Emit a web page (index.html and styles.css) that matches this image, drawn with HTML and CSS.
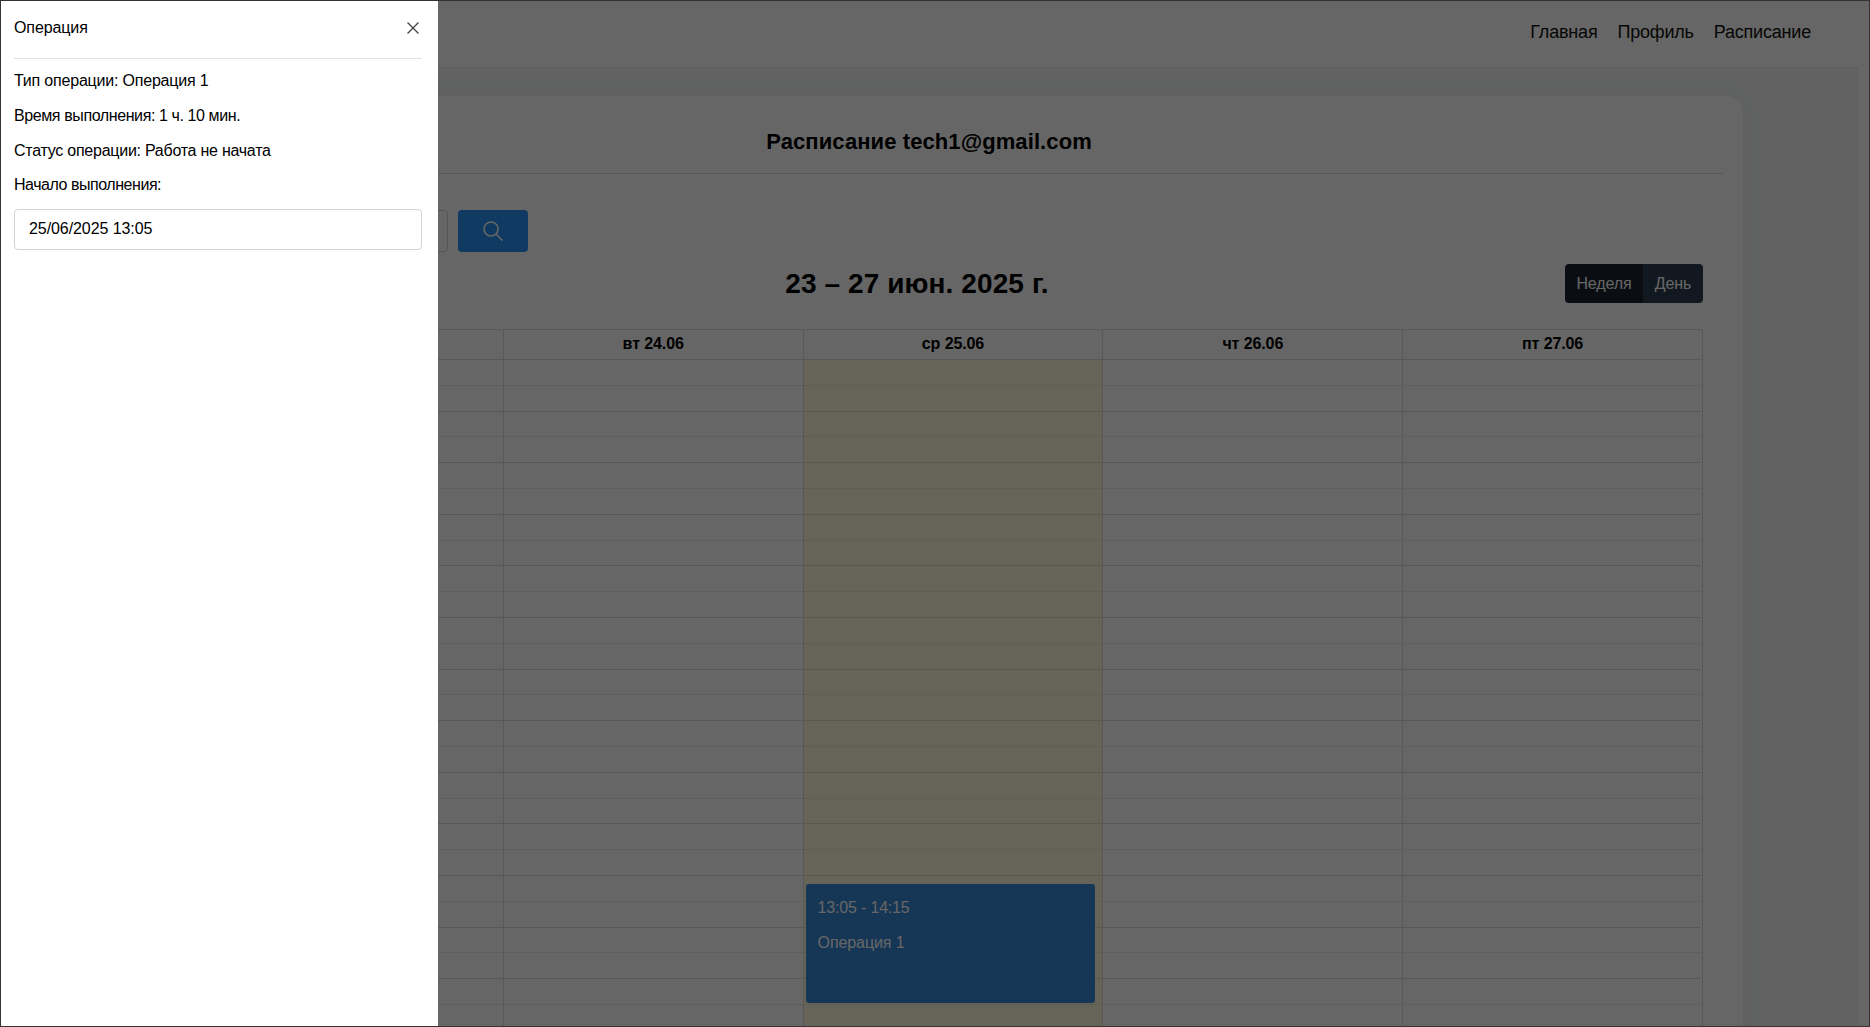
FILE: index.html
```html
<!DOCTYPE html>
<html lang="ru">
<head>
    <meta charset="UTF-8">
    <meta name="viewport" content="width=device-width, initial-scale=1.0">
    <title>Расписание</title>
    <link rel="stylesheet" href="styles.css">
</head>
<body>
<div class="frame">
    <div class="page">
        <nav class="navbar">
            <a class="nav-link">Главная</a>
            <a class="nav-link">Профиль</a>
            <a class="nav-link">Расписание</a>
        </nav>

        <main class="main">
            <section class="card">
                <h1 class="card-title">Расписание tech1@gmail.com</h1>
                <div class="card-body">
                    <div class="search-row">
                        <input class="search-input" type="text">
                        <button class="search-button">
                            <svg width="22" height="22" viewBox="0 0 22 22" fill="none" stroke="currentColor" stroke-width="1.6">
                                <circle cx="9" cy="9" r="7"/>
                                <path d="M14 14l6.5 6.5"/>
                            </svg>
                        </button>
                    </div>

                    <div class="toolbar">
                        <div class="arrows">
                            <button class="tb-button">‹</button>
                            <button class="tb-button">›</button>
                        </div>
                        <h2 class="date-title">23 – 27 июн. 2025 г.</h2>
                        <div class="views">
                            <button class="tb-button active">Неделя</button>
                            <button class="tb-button">День</button>
                        </div>
                    </div>

                    <div class="calendar">
                        <div class="head">
                            <div class="head-cell"></div>
                            <div class="head-cell">пн 23.06</div>
                            <div class="head-cell">вт 24.06</div>
                            <div class="head-cell">ср 25.06</div>
                            <div class="head-cell">чт 26.06</div>
                            <div class="head-cell">пт 27.06</div>
                        </div>
                        <div class="grid">
                            <div class="slot"></div><div class="slot hour"></div>
                            <div class="slot"></div><div class="slot hour"></div>
                            <div class="slot"></div><div class="slot hour"></div>
                            <div class="slot"></div><div class="slot hour"></div>
                            <div class="slot"></div><div class="slot hour"></div>
                            <div class="slot"></div><div class="slot hour"></div>
                            <div class="slot"></div><div class="slot hour"></div>
                            <div class="slot"></div><div class="slot hour"></div>
                            <div class="slot"></div><div class="slot hour"></div>
                            <div class="slot"></div><div class="slot hour"></div>
                            <div class="slot"></div><div class="slot hour"></div>
                            <div class="slot"></div><div class="slot hour"></div>
                            <div class="slot"></div><div class="slot hour"></div>
                            <div class="columns">
                                <div class="column"></div>
                                <div class="column"></div>
                                <div class="column"></div>
                                <div class="column today">
                                    <div class="event">
                                        <p class="event-time">13:05 - 14:15</p>
                                        <p>Операция 1</p>
                                    </div>
                                </div>
                                <div class="column"></div>
                                <div class="column"></div>
                            </div>
                        </div>
                    </div>
                </div>
            </section>
        </main>
    </div>

    <div class="backdrop"></div>

    <aside class="drawer">
        <div class="drawer-header">
            <span>Операция</span>
            <svg class="close-icon" width="12" height="12" viewBox="0 0 12 12" fill="none" stroke="currentColor" stroke-width="1.3">
                <path d="M.5.5l11 11M11.500.5l-11 11"/>
            </svg>
        </div>
        <p class="line-type">Тип операции: Операция 1</p>
        <p class="line-time">Время выполнения: 1 ч. 10 мин.</p>
        <p class="line-status">Статус операции: Работа не начата</p>
        <p class="line-start">Начало выполнения:</p>
        <input class="date-input" type="text" value="25/06/2025 13:05">
    </aside>
</div>
</body>
</html>
```

FILE: styles.css
```css
* {
    box-sizing: border-box;
}
html, body {
    margin: 0;
    height: 100%;
}
body {
    font-family: "Liberation Sans", Arial, sans-serif;
    font-size: 16px;
    color: #000;
}
.frame {
    position: relative;
    height: 1027px;
    border: 1px solid #333;
    background: #fff;
    overflow: hidden;
}
.page {
    width: 1858px;
}
.navbar {
    display: flex;
    justify-content: flex-end;
    align-items: center;
    gap: 20px;
    height: 67px;
    padding-right: 48px;
    padding-bottom: 4px;
    border-bottom: 1px solid #e3e6e6;
    background: #fff;
}
.nav-link {
    font-size: 18px;
    letter-spacing: -0.2px;
    color: #111;
}
.main {
    height: 960px;
    padding: 28px 116px 0;
    background: #f4f6f6;
}
.card {
    height: 1000px;
    background: #fff;
    border-radius: 16px;
    box-shadow: 0 0 24px rgba(40, 40, 80, 0.06);
}
.card-title {
    margin: 0 20px;
    padding: 32px 2px 0 0;
    height: 78px;
    font-size: 22px;
    line-height: 28px;
    letter-spacing: 0.09px;
    text-align: center;
    border-bottom: 1px solid #ddd;
}
.card-body {
    padding: 36px 40px 0;
}
.search-row {
    display: flex;
    gap: 10px;
    height: 42px;
}
.search-input {
    width: 291px;
    border: 1px solid #ced4da;
    border-radius: 4px;
}
.search-button {
    display: flex;
    align-items: center;
    justify-content: center;
    width: 70px;
    border: none;
    border-radius: 4px;
    background: #2892f2;
    color: #fff;
}
.toolbar {
    display: flex;
    justify-content: space-between;
    align-items: center;
    margin-top: 12px;
    height: 39px;
}
.date-title {
    margin: 0;
    font-size: 28px;
    letter-spacing: 0.1px;
}
.arrows {
    display: flex;
    width: 112px;
    gap: 8px;
}
.views {
    display: flex;
    width: 138px;
    border-radius: 4px;
    overflow: hidden;
}
.tb-button {
    height: 39px;
    padding: 0 12px;
    border: none;
    font-family: inherit;
    font-size: 16px;
    letter-spacing: -0.1px;
    background: #2c3e50;
    color: #fff;
}
.tb-button.active {
    background: #1a252f;
}
.views .tb-button {
    flex: 0 0 60px;
    padding: 0;
}
.views .tb-button.active {
    flex: 0 0 78px;
}
.calendar {
    margin-top: 26px;
    border: 1px solid #ddd;
    border-bottom: none;
}
.head, .columns {
    display: grid;
    grid-template-columns: 45px repeat(5, 1fr);
}
.head {
    height: 30px;
    border-bottom: 1px solid #ddd;
}
.head-cell {
    padding-top: 4px;
    font-weight: bold;
    text-align: center;
    line-height: 19px;
    letter-spacing: -0.1px;
    border-left: 1px solid #ddd;
}
.head-cell:first-child {
    border-left: none;
}
.grid {
    position: relative;
    padding-right: 1px;
}
.slot {
    height: 25.8px;
    border-bottom: 1px dotted #ddd;
}
.slot.hour {
    border-bottom: 1px solid #ddd;
}
.columns {
    position: absolute;
    inset: 0;
}
.column {
    position: relative;
    border-left: 1px solid #ddd;
}
.column:first-child {
    border-left: none;
}
.today {
    background: rgba(255, 220, 40, 0.15);
}
.event {
    position: absolute;
    top: 524px;
    left: 2px;
    right: 7px;
    height: 119px;
    padding: 12px 10px 12px 12px;
    border-radius: 3px;
    background: #3788d8;
    color: #fff;
    letter-spacing: -0.1px;
}
.event p {
    margin: 0 0 11px;
    line-height: 24px;
}
.event .event-time {
    letter-spacing: -0.18px;
}
.backdrop {
    position: absolute;
    inset: 0;
    background: rgba(0, 0, 0, 0.6);
}
.drawer {
    position: absolute;
    top: 0;
    left: 0;
    bottom: 0;
    width: 437px;
    padding: 0 16px 0 13px;
    background: #fff;
}
.drawer-header {
    display: flex;
    justify-content: space-between;
    align-items: center;
    height: 58px;
    padding: 0 3px 4px 0;
    border-bottom: 1px solid #dee2e6;
    margin-bottom: 10px;
    letter-spacing: -0.1px;
}
.close-icon {
    color: #444;
}
.drawer p {
    margin: 0 0 11px;
    line-height: 24px;
}
.drawer .line-type {
    letter-spacing: -0.2px;
}
.drawer .line-time {
    letter-spacing: -0.4px;
}
.drawer .line-status {
    margin-bottom: 10px;
    letter-spacing: -0.25px;
}
.drawer .line-start {
    margin-bottom: 12px;
    letter-spacing: -0.46px;
}
.date-input {
    display: block;
    width: 100%;
    height: 41px;
    padding: 0 14px 2px;
    border: 1px solid #ced4da;
    border-radius: 4px;
    font-family: inherit;
    font-size: 16px;
    letter-spacing: -0.08px;
}
```
